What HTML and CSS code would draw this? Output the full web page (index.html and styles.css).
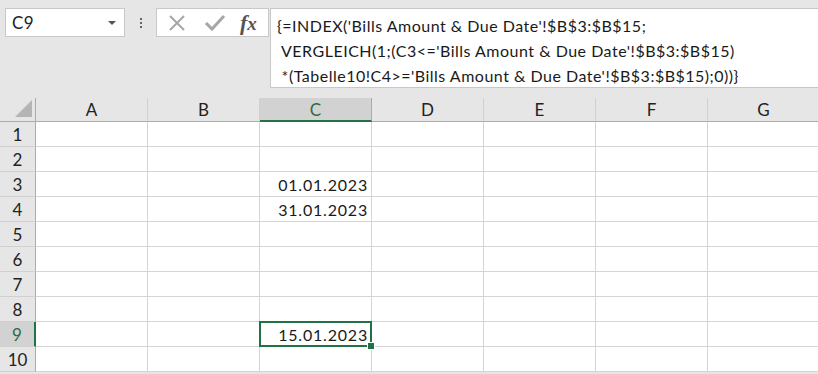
FILE: index.html
```html
<!DOCTYPE html>
<html lang="de">
<head>
  <meta charset="UTF-8" />
  <title>Tabelle10</title>
  <link rel="stylesheet" href="styles.css">
</head>
<body>
  <!-- Namenfeld + Bearbeitungsleiste -->
  <div class="toolbar">
    <div class="namebox">
      <span class="ref">C9</span>
      <span class="caret"></span>
    </div>
    <div class="grip"><i></i><i></i><i></i></div>
    <div class="fxbox">
      <svg class="ico" width="20" height="20" viewBox="0 0 20 20"><path d="M3 3 L17 17 M17 3 L3 17" stroke="#a6a6a6" stroke-width="2" fill="none"/></svg>
      <svg class="ico" width="22" height="20" viewBox="0 0 22 20"><path d="M2 10 L8 16 L20 3" stroke="#a6a6a6" stroke-width="3" fill="none"/></svg>
      <span class="fx">f<em>x</em></span>
    </div>
    <div class="formula">{=INDEX('Bills Amount &amp; Due Date'!$B$3:$B$15;
 VERGLEICH(1;(C3&lt;='Bills Amount &amp; Due Date'!$B$3:$B$15)
 *(Tabelle10!C4&gt;='Bills Amount &amp; Due Date'!$B$3:$B$15);0))}</div>
  </div>

  <!-- Tabellenraster -->
  <div class="sheet" id="sheet"></div>

  <script>
    const COLS = ["A","B","C","D","E","F","G"];
    const DATA = { "C3": "01.01.2023", "C4": "31.01.2023", "C9": "15.01.2023" };
    const ACTIVE = { col: "C", row: 9 };

    function renderSheet() {
      let html = '<div class="corner"><span class="tri"></span></div>';
      COLS.forEach(c => {
        html += `<div class="colhead${c === ACTIVE.col ? ' sel' : ''}">${c}</div>`;
      });
      for (let r = 1; r <= 10; r++) {
        html += `<div class="rowhead${r === ACTIVE.row ? ' sel' : ''}">${r}</div>`;
        COLS.forEach(c => {
          let active = (c === ACTIVE.col && r === ACTIVE.row) ? ' active' : '';
          html += `<div class="cell${active}">${DATA[c + r] || ""}</div>`;
        });
      }
      document.getElementById("sheet").innerHTML = html;
    }
    renderSheet();
  </script>
</body>
</html>
```

FILE: styles.css
```css
body { margin: 0; background: #e6e6e6; font-family: Lato, 'Liberation Sans', sans-serif; color: #222; overflow: hidden; width: 818px; height: 374px; }

.toolbar { display: flex; align-items: flex-start; padding: 8px 0 0 5px; height: 98px; box-sizing: border-box; }
.namebox { width: 120px; height: 29px; box-sizing: border-box; background: #fff; border: 1px solid #c8c8c8; display: flex; align-items: center; justify-content: space-between; padding: 0 6px 0 6px; }
.namebox .ref { font-size: 17px; letter-spacing: 0.5px; }
.namebox .caret { width: 0; height: 0; border-left: 4px solid transparent; border-right: 4px solid transparent; border-top: 4px solid #555; margin-right: 2px; }
.grip { width: 31px; height: 29px; display: flex; flex-direction: column; align-items: center; justify-content: center; gap: 2px; }
.grip i { width: 2px; height: 2px; background: #666; display: block; }
.fxbox { width: 113px; height: 29px; box-sizing: border-box; background: #fff; border: 1px solid #c8c8c8; display: flex; align-items: center; padding: 0 0 0 10px; gap: 17px; }
.fxbox .ico { display: block; }
.fx { font-family: 'Liberation Serif', 'DejaVu Serif', serif; font-style: italic; font-weight: bold; font-size: 22px; color: #555; margin-left: -3px; }
.fx em { font-size: 19px; }
.formula { flex: 1; height: 80px; box-sizing: border-box; background: #fff; border: 1px solid #c8c8c8; border-right: none; margin-left: 1px; padding: 4px 0 0 6px; white-space: pre; font-size: 16px; line-height: 25px; letter-spacing: 0.5px; color: #1a1a1a; overflow: hidden; }

.sheet { display: grid; grid-template-columns: 36px repeat(7, 112px); grid-template-rows: 24px repeat(10, 25px); font-size: 16px; }
.sheet > div { box-sizing: border-box; }
.corner { border-right: 1px solid #ababab; border-bottom: 1px solid #ababab; display: flex; align-items: flex-end; justify-content: flex-end; padding: 0 3px 4px 0; }
.corner .tri { width: 17px; height: 17px; background: #b4b4b4; clip-path: polygon(100% 0, 100% 100%, 0 100%); }
.colhead { display: flex; align-items: center; justify-content: center; border-right: 1px solid #d0d0d0; border-bottom: 1px solid #ababab; color: #222; font-size: 17px; }
.colhead.sel { background: #d2d2d2; color: #2f6b47; border-bottom: 2px solid #217346; border-right-color: #ababab; }
.rowhead { display: flex; align-items: center; justify-content: center; border-right: 1px solid #ababab; border-bottom: 1px solid #d0d0d0; color: #222; font-size: 17px; }
.rowhead.sel { background: #d2d2d2; color: #2f6b47; border-right: 2px solid #217346; }
.cell { background: #fff; border-right: 1px solid #d4d4d4; border-bottom: 1px solid #d4d4d4; text-align: right; padding: 2px 3px 0 0; letter-spacing: 0.8px; color: #1a1a1a; line-height: 22px; }
.cell.active { position: relative; }
.cell.active::after { content: ""; position: absolute; left: -1px; top: -1px; right: -1px; bottom: -1px; border: 2px solid #217346; }
.cell.active::before { content: ""; position: absolute; right: -4px; bottom: -4px; width: 6px; height: 6px; background: #217346; border: 1px solid #fff; z-index: 1; }
```
